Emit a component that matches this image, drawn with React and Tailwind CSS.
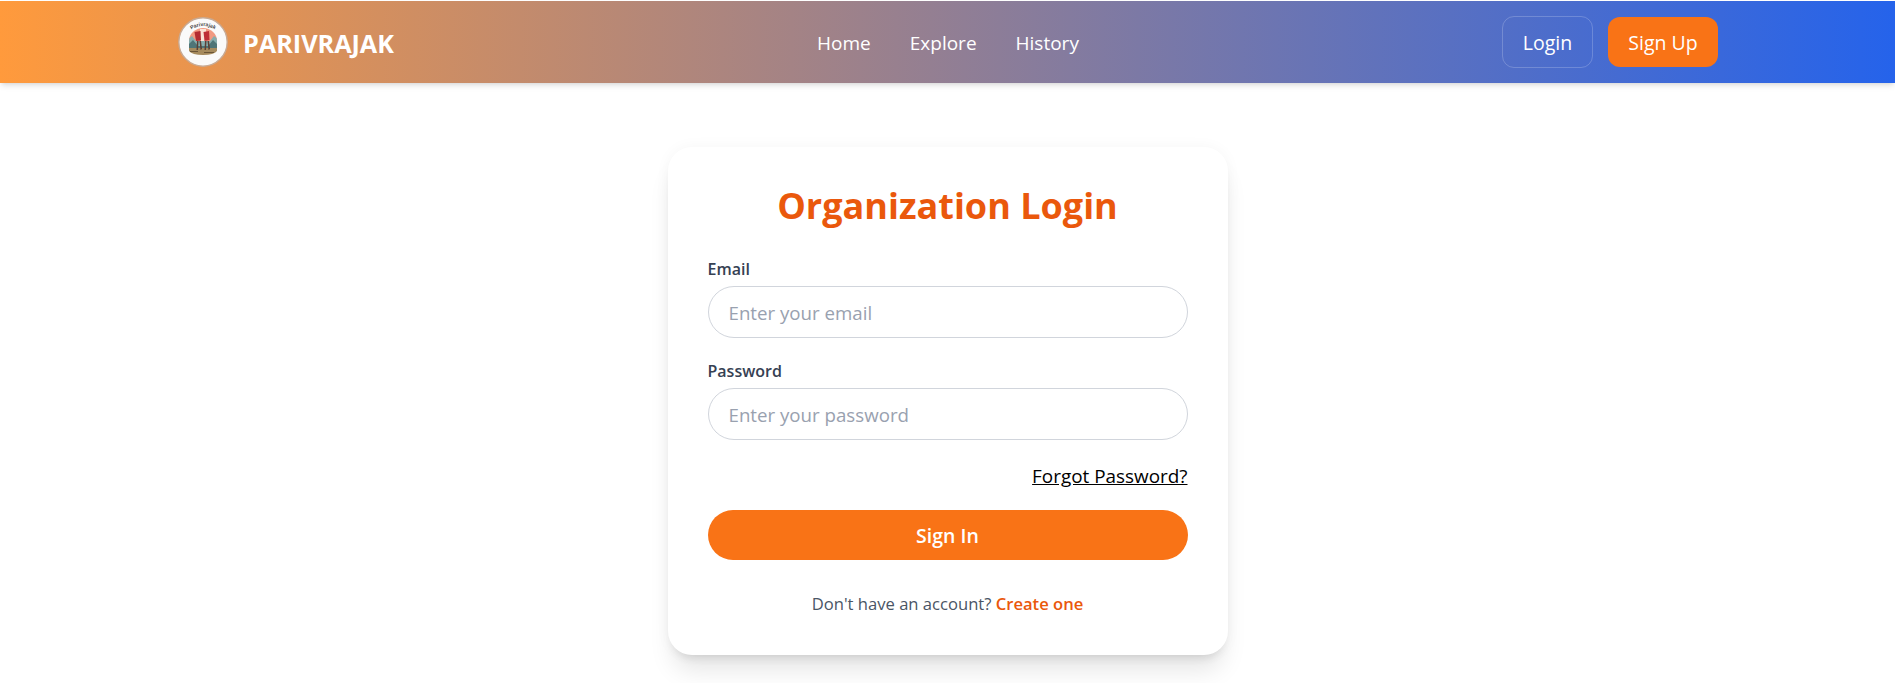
import React from "react";

const Logo = () => (
  <svg viewBox="0 0 50 50" className="h-[50px] w-[50px] shrink-0">
    <defs>
      <path id="logoArc" d="M11 14 Q25 4 39 14" />
      <clipPath id="logoScene">
        <path d="M11 24 A14 13 0 0 1 39 24 L39 34 Q36 38 25 38 Q14 38 11 34 Z" />
      </clipPath>
    </defs>
    <circle cx="25" cy="25" r="24.2" fill="#fafafa" stroke="#c8aa94" strokeWidth="1.4" />
    <text fontSize="5.2" fontWeight="700" fill="#4a4a4a" fontFamily="'Liberation Sans', sans-serif">
      <textPath href="#logoArc" startOffset="50%" textAnchor="middle">Parivrajak</textPath>
    </text>
    <g clipPath="url(#logoScene)">
      <rect x="10" y="11" width="30" height="20" fill="#f29a82" />
      <path d="M22 12 h6 v12 h-6 Z" fill="#fae3d5" />
      <path d="M10 22 L14 19 L18 24 L32 24 L36 19 L40 22 L40 33 L10 33 Z" fill="#86adad" />
      <path d="M10 28 L15 23 L20 29 L30 29 L35 23 L40 28 L40 34 L10 34 Z" fill="#4f7577" />
      <rect x="10" y="31" width="30" height="8" fill="#a68b5e" />
      <path d="M12 34 h8 v1 h-8 Z M26 35 h10 v1 h-10 Z" fill="#6b5638" />
    </g>
    <path d="M16.5 15 L22.5 14 L23 23.5 L18 24 Z" fill="#b32b32" />
    <path d="M25.5 15 L31 14 L31.5 23 L26.5 24 Z" fill="#bd2f36" />
    <path d="M19 24 L20.5 24 L20 33 L18.5 33 Z M21.5 24 L23 24 L24 32 L22.5 33 Z" fill="#5c4035" />
    <path d="M27 24 L28.5 24 L28 33 L26.5 33 Z M29.5 24 L31 24 L32 32 L30.5 33 Z" fill="#5c4035" />
  </svg>
);

const Field = ({ label, placeholder, type }) => (
  <div className="mb-[21px]">
    <label className="mb-[5px] block text-[16px] leading-[24px] font-semibold text-gray-700">{label}</label>
    <input
      type={type}
      placeholder={placeholder}
      className="block h-[52px] w-full rounded-full border border-gray-300 bg-white px-5 text-[18.7px] outline-none placeholder:text-gray-400"
    />
  </div>
);

export default function App() {
  return (
    <div className="min-h-[683px] bg-white pt-px font-['Open_Sans','Noto_Sans',sans-serif]">
      <nav className="h-[82px] bg-linear-to-r/srgb from-[#ff9a3c] to-[#2563eb] shadow-md">
        <div className="mx-auto flex h-full max-w-[1541px] items-center justify-between pl-px">
          <div className="flex w-[400px] items-center gap-[15px]">
            <Logo />
            <span className="pt-[3px] text-[25.2px] font-bold text-white">PARIVRAJAK</span>
          </div>
          <div className="flex items-center gap-[39px] pt-[2px] text-[19px] font-medium text-white">
            <a>Home</a>
            <a>Explore</a>
            <a>History</a>
          </div>
          <div className="flex w-[400px] items-center justify-end gap-[15px] text-[19.5px] font-medium text-white">
            <button className="h-[52px] w-[91px] rounded-xl border border-white/20 pt-[2px]">Login</button>
            <button className="h-[50px] w-[110px] rounded-xl bg-[#f97316] pt-[2px]">Sign Up</button>
          </div>
        </div>
      </nav>

      <div className="mx-auto mt-[64px] w-[560px] rounded-3xl bg-white p-10 shadow-[0_20px_25px_-5px_rgba(0,0,0,0.1),0_8px_10px_-6px_rgba(0,0,0,0.1),0_0_15px_rgba(0,0,0,0.04)]">
        <h1 className="mb-[32px] text-center text-[36px] leading-[38px] font-bold text-[#ea580c]">Organization Login</h1>
        <Field label="Email" placeholder="Enter your email" type="email" />
        <Field label="Password" placeholder="Enter your password" type="password" />
        <div className="mb-[19px] text-right text-[18.9px] leading-[30px] text-black underline">Forgot Password?</div>
        <button className="block h-[50px] w-full rounded-full bg-[#f97316] pt-[2px] text-[19.5px] font-semibold text-white">Sign In</button>
        <p className="mt-[32px] text-center text-[16.6px] leading-[23px] text-gray-600">
          Don't have an account? <span className="font-semibold text-[#ea580c]">Create one</span>
        </p>
      </div>
    </div>
  );
}
